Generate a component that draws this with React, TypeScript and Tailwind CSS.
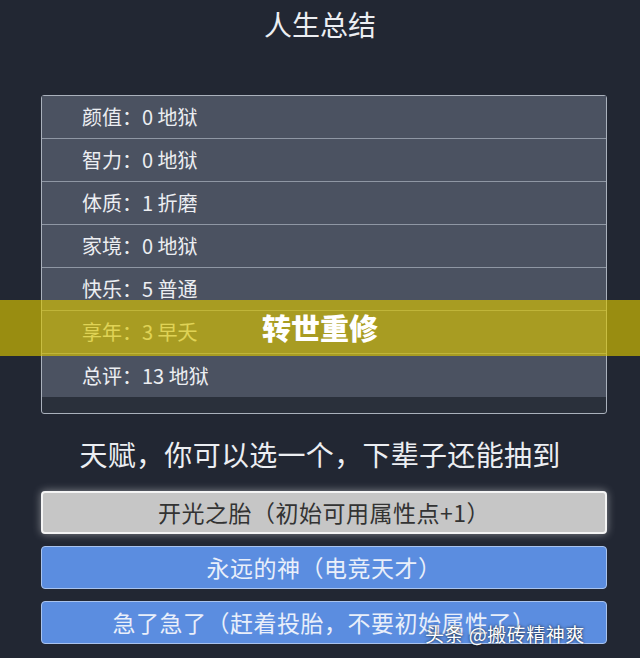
const rows = [
  "颜值：0 地狱",
  "智力：0 地狱",
  "体质：1 折磨",
  "家境：0 地狱",
  "快乐：5 普通",
  "享年：3 早夭",
  "总评：13 地狱",
];

const talents = [
  { label: "开光之胎（初始可用属性点+1）", picked: true },
  { label: "永远的神（电竞天才）", picked: false },
  { label: "急了急了（赶着投胎，不要初始属性了）", picked: false },
];

export default function App() {
  return (
    <div
      className="relative w-[640px] h-[658px] overflow-hidden bg-[#222733] text-[#eceef2]"
      style={{ fontFamily: '"Noto Sans CJK SC", "Noto Sans", sans-serif' }}
    >
      <h1 className="h-[48px] flex items-center justify-center text-[28px] font-normal">人生总结</h1>

      <div className="mt-[47px] ml-[41px] w-[566px] border border-[#aab1bc] rounded-[3px] bg-[#2a303b] pb-[16px]">
        {rows.map((r, i) => (
          <div
            key={i}
            className={
              "h-[43px] flex items-center pl-[40px] bg-[#4b5261] text-[20px] " +
              (i < rows.length - 1 ? "border-b border-[#8f97a4]" : "")
            }
          >
            {r}
          </div>
        ))}
      </div>

      <p className="mt-[20px] text-center text-[28px] leading-[40px] tracking-[0.3px]">天赋，你可以选一个，下辈子还能抽到</p>

      <div className="mt-[17px] ml-[41px] w-[566px] flex flex-col gap-[12px]">
        {talents.map((t, i) => (
          <button
            key={i}
            className={
              t.picked
                ? "h-[43px] rounded-[4px] border-2 border-[#f4f4f4] bg-[#c6c6c6] text-[#333] text-[23px] tracking-[0.5px] shadow-[0_0_8px_rgba(255,255,255,0.45)]"
                : "h-[43px] rounded-[4px] border border-[#a9c3ee] bg-[#5b8de0] text-[#e9effa] text-[23px] tracking-[0.5px]"
            }
          >
            {t.label}
          </button>
        ))}
      </div>

      {/* overlay banner */}
      <div className="absolute left-0 right-0 top-[300px] h-[56px] flex items-center justify-center bg-[rgba(218,197,0,0.65)]">
        <span className="text-white text-[29px] font-black">转世重修</span>
      </div>

      {/* watermark */}
      <div className="absolute left-[425px] top-[620px] text-[19px] tracking-[0.5px] text-white [text-shadow:0_0_3px_rgba(0,0,0,0.9)]">
        头条 @搬砖精神爽
      </div>
    </div>
  );
}
